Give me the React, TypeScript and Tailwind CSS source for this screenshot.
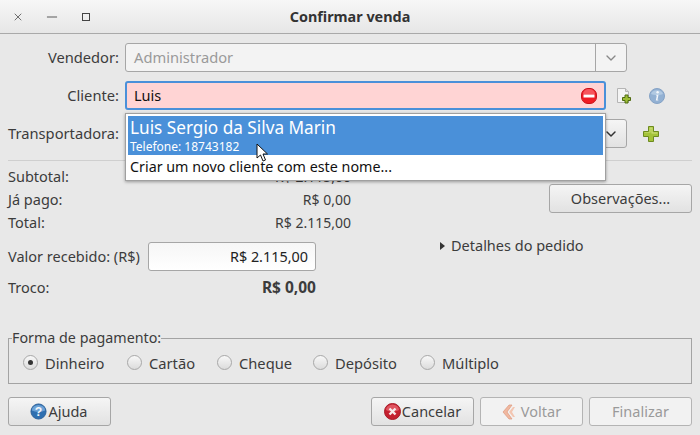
import { ChevronDown, Minus, X } from "lucide-react";

const font = "font-['Noto_Sans','Open_Sans',sans-serif]";
const btn =
  "h-[29px] flex items-center justify-center rounded-[3px] border border-[#a6a6a6] bg-gradient-to-b from-[#f5f5f5] to-[#e2e2e2] text-[14.5px] text-[#3c3c3c]";
const btnOff =
  "h-[29px] flex items-center justify-center rounded-[3px] border border-[#b4b4b4] bg-[#f2f2f2] text-[14.5px] text-[#9a9a9a]";

function Label({ children }: { children: string }) {
  return <div className="w-[111px] mr-[6px] shrink-0 text-right text-[14.7px] text-[#3c3c3c]">{children}</div>;
}

function Radio({ label, checked, width }: { label: string; checked?: boolean; width: string }) {
  return (
    <div className={`flex items-center ${width}`}>
      <span className="w-[15px] h-[15px] rounded-full border border-[#a8a8a8] bg-gradient-to-b from-[#f8f8f8] to-[#dcdcdc] flex items-center justify-center mr-[7px]">
        {checked && <span className="w-[5px] h-[5px] rounded-full bg-[#333]" />}
      </span>
      <span className="text-[14.7px] text-[#3c3c3c]">{label}</span>
    </div>
  );
}

function GreenPlus() {
  return (
    <svg width="16" height="16" viewBox="0 0 16 16">
      <path d="M5.500 .5h5v5h5v5h-5v5h-5v-5h-5v-5h5z" fill="#a4c339" stroke="#6d8a1f" strokeWidth="1" />
      <path d="M6.500 1.500h3v5h5v1h-6v-5h-1v4h-6v-.5h5z" fill="#cfe27f" />
    </svg>
  );
}

function NoEntry() {
  return (
    <svg width="16" height="16" viewBox="0 0 16 16">
      <rect x="0.5" y="0.5" width="15" height="15" rx="6.5" fill="#ef1c24" stroke="#c8101a" />
      <path d="M2 6 a6 5 0 0 1 12 0z" fill="#f7555c" />
      <rect x="2.5" y="6.5" width="11" height="3" fill="#fff" />
    </svg>
  );
}

function NewDoc() {
  return (
    <svg width="16" height="17" viewBox="0 0 16 17">
      <path d="M1.500 1.500h8l3 3v11h-11z" fill="#f4f4f4" stroke="#b5b5b5" />
      <path d="M9.500 1.500v3h3" fill="#dcdcdc" stroke="#b5b5b5" />
      <path d="M9 8h3v2.500h2.500v3H12V16H9v-2.500H6.500v-3H9z" fill="#9cbd35" stroke="#4f6a12" />
    </svg>
  );
}

function InfoIcon() {
  return (
    <svg width="16" height="16" viewBox="0 0 16 16">
      <circle cx="8" cy="8" r="7.500" fill="#93b1d3" stroke="#86a3c6" />
      <path d="M2 6a6.200 5 0 0 1 12 0c-3 1.500-9 1.500-12 0z" fill="#b1c9e2" />
      <circle cx="8.600" cy="4.300" r="1.200" fill="#f3f6fa" />
      <path d="M7.200 6.800h2.300l-1 5h.8v.8H6.800l1-5h-.8z" fill="#f3f6fa" />
    </svg>
  );
}

function HelpIcon() {
  return (
    <svg width="17" height="17" viewBox="0 0 18 18" className="mr-[1px] -ml-[1px]">
      <circle cx="9" cy="9" r="8" fill="#2f6fb0" stroke="#2a5f98" />
      <path d="M2 8a7 6 0 0 1 14 0c-4 2-10 2-14 0z" fill="#6ca2d6" />
      <text x="9" y="14" textAnchor="middle" fontSize="13" fontWeight="700" fill="#f2f6fb" fontFamily="Liberation Sans, sans-serif">?</text>
    </svg>
  );
}

function CancelIcon() {
  return (
    <svg width="17" height="17" viewBox="0 0 17 17" className="mr-[1px]">
      <circle cx="8.500" cy="8.500" r="8" fill="#c4202f" stroke="#a81a27" />
      <path d="M2 7a6.500 5.500 0 0 1 13 0c-4 2-9 2-13 0z" fill="#df5460" />
      <path d="M5.500 5.500l6 6M11.500 5.500l-6 6" stroke="#f7e9ea" strokeWidth="2.400" />
    </svg>
  );
}

function BackIcon() {
  return (
    <svg width="14" height="16" viewBox="0 0 14 16" className="mr-[5px]">
      <path d="M7 1L1 8l6 7h3L5 8l5-7z" fill="#f0b8a0" stroke="#dc9a7e" strokeWidth="0.700" />
      <path d="M11 3L7 8l4 5h2L10 8l3-5z" fill="#f3c6b2" />
    </svg>
  );
}

function Pointer() {
  return (
    <svg width="14" height="20" viewBox="0 0 14 20" className="absolute left-[130px] top-[29px]">
      <path d="M1 1v14l3.500-3 2.500 6 2.500-1-2.500-6H11.500z" fill="#fff" stroke="#111" strokeWidth="1" />
    </svg>
  );
}

export default function App() {
  return (
    <div className={`w-[700px] h-[435px] overflow-hidden bg-[#e8e8e8] flex flex-col ${font}`}>
      {/* barra de titulo */}
      <div className="h-[34px] shrink-0 relative flex items-center border-b border-[#a9a9a9] bg-gradient-to-b from-[#f7f7f7] to-[#e6e6e6]">
        <div className="flex items-center pl-[12px] text-[#444]">
          <X size={12} strokeWidth={1.500} />
          <Minus size={16} strokeWidth={1.300} className="ml-[20px]" />
          <span className="w-[8px] h-[8px] ml-[22px] border border-[#444]" />
        </div>
        <div className="absolute inset-x-0 text-center text-[14.4px] font-bold text-[#333]">Confirmar venda</div>
      </div>

      <div className="flex-1 px-[8px] flex flex-col">
        <div className="flex flex-col gap-[9px] pt-[9px]">
          <div className="flex items-center h-[29px]">
            <Label>Vendedor:</Label>
            <div className="w-[502px] h-[29px] flex rounded-[3px] border border-[#a6a6a6] bg-[#f3f3f3]">
              <div className="flex-1 pl-[8px] flex items-center text-[14.7px] text-[#9a9a9a]">Administrador</div>
              <div className="w-[31px] border-l border-[#a6a6a6] flex items-center justify-center text-[#888]">
                <ChevronDown size={16} strokeWidth={2} />
              </div>
            </div>
          </div>

          <div className="flex items-center h-[29px] relative">
            <Label>Cliente:</Label>
            <div className="w-[481px] h-[29px] flex items-center rounded-[3px] border-2 border-[#4a90d9] bg-[#ffd4d4] pl-[7px] pr-[7px] justify-between">
              <span className="text-[14.5px] text-[#111]">Luis</span>
              <NoEntry />
            </div>
            <div className="ml-[10px] flex"><NewDoc /></div>
            <div className="ml-[17px] flex"><InfoIcon /></div>
            <div className="absolute left-[117px] top-[32px] w-[481px] h-[68px] z-10 bg-white border border-[#a0a0a0] p-[2px] shadow-[0_1px_3px_rgba(0,0,0,0.35)]">
              <div className="h-[39px] bg-[#4a90d9] px-[2px] text-white flex flex-col">
                <div className="text-[17.2px] leading-[24px]">Luis Sergio da Silva Marin</div>
                <div className="text-[12px] leading-[14px]">Telefone: 18743182</div>
              </div>
              <div className="h-[23px] px-[2px] flex items-center text-[14.3px] text-[#111]">Criar um novo cliente com este nome...</div>
              <Pointer />
            </div>
          </div>

          <div className="flex items-center h-[29px]">
            <Label>Transportadora:</Label>
            <div className="w-[502px] h-[29px] flex justify-end rounded-[3px] border border-[#a6a6a6] bg-gradient-to-b from-[#f5f5f5] to-[#e2e2e2]">
              <div className="w-[31px] flex items-center justify-center text-[#333]">
                <ChevronDown size={16} strokeWidth={2.200} />
              </div>
            </div>
            <div className="ml-[16px] flex"><GreenPlus /></div>
          </div>
        </div>

        <div className="h-px bg-[#cfcfcf] mt-[12px] shrink-0" />

        <div className="flex">
          <div className="w-[343px] pt-[4px] text-[14.5px] text-[#3c3c3c]">
            <div className="flex justify-between items-center h-[23px]"><span>Subtotal:</span><span className="text-[14px]">R$ 2.115,00</span></div>
            <div className="flex justify-between items-center h-[23px]"><span>Já pago:</span><span className="text-[14px]">R$ 0,00</span></div>
            <div className="flex justify-between items-center h-[23px]"><span>Total:</span><span className="text-[14px]">R$ 2.115,00</span></div>
            <div className="flex items-center w-[308px] justify-between h-[29px] mt-[8px]">
              <span>Valor recebido: (R$)</span>
              <div className="w-[168px] h-[29px] rounded-[3px] border border-[#a6a6a6] bg-gradient-to-b from-[#f6f6f6] to-white flex items-center justify-end pr-[7px] text-[14.4px] text-[#222]">R$ 2.115,00</div>
            </div>
            <div className="flex items-center w-[308px] justify-between h-[23px] mt-[5px]"><span>Troco:</span><span className="font-bold text-[15.5px]">R$ 0,00</span></div>
          </div>
          <div className="flex-1 flex flex-col items-end pt-[23px]">
            <button className={`${btn} w-[143px]`}>Observações...</button>
            <div className="self-start ml-[89px] mt-[22px] flex items-center text-[14.5px] text-[#3c3c3c]">
              <span className="w-0 h-0 border-y-[4.5px] border-y-transparent border-l-[5px] border-l-[#333] mr-[6px]" />
              Detalhes do pedido
            </div>
          </div>
        </div>

        <fieldset className="mt-[30px] h-[55px] border border-[#a3a3a3] px-[14px]">
          <legend className="-ml-[11px] p-0 text-[14.3px] leading-[18px] text-[#3c3c3c]">Forma de pagamento:</legend>
          <div className="flex items-center h-[28px] mt-[2px]">
            <Radio label="Dinheiro" checked width="w-[104px]" />
            <Radio label="Cartão" width="w-[90px]" />
            <Radio label="Cheque" width="w-[96px]" />
            <Radio label="Depósito" width="w-[107px]" />
            <Radio label="Múltiplo" width="w-[90px]" />
          </div>
        </fieldset>

        <div className="flex mt-[13px]">
          <button className={`${btn} w-[103px]`}><HelpIcon />Ajuda</button>
          <button className={`${btn} w-[103px] ml-auto`}><CancelIcon />Cancelar</button>
          <button className={`${btnOff} w-[103px] ml-[6px]`}><BackIcon />Voltar</button>
          <button className={`${btnOff} w-[103px] ml-[6px]`}>Finalizar</button>
        </div>
      </div>
    </div>
  );
}
